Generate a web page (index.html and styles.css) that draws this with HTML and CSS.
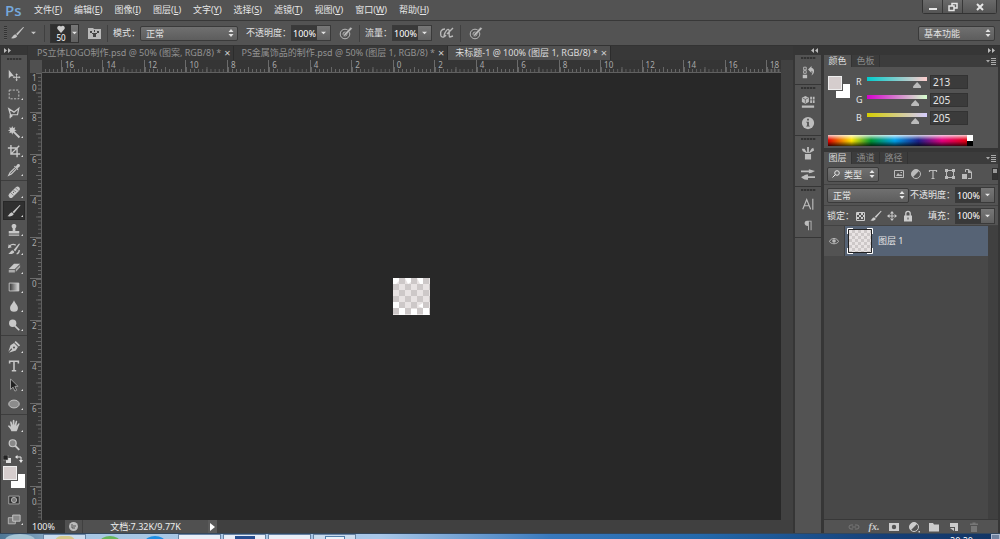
FILE: index.html
```html
<!DOCTYPE html>
<html lang="zh-CN">
<head>
<meta charset="utf-8">
<title>Photoshop</title>
<link rel="stylesheet" href="styles.css">
</head>
<body>
<svg class="defs" aria-hidden="true">
  <defs>
    <symbol id="updown" viewBox="0 0 6 8"><path d="M0.500 3L3 0L5.500 3ZM0.500 5L3 8L5.500 5Z"/></symbol>
    <symbol id="down" viewBox="0 0 6 4"><path d="M0 0.500H6L3 3.500Z"/></symbol>
    <symbol id="brush" viewBox="0 0 16 16"><path d="M15.500 1.500L8 10.500L6.300 9L14.500 1Z M5.500 9.500L7.700 11.500C7 14 3.500 14.500 0.500 14C2.500 13 3 10 5.500 9.500Z"/></symbol>
    <symbol id="pressure" viewBox="0 0 14 14"><circle cx="6" cy="8" r="4.800" fill="none" stroke="currentColor"/><circle cx="6" cy="8" r="2" fill="none" stroke="currentColor"/><path d="M4 11L5 8L11.500 1L13.500 2.500L7 9.500Z" stroke="#535353" stroke-width=".6"/></symbol>
    <symbol id="menu" viewBox="0 0 10 7"><path d="M0 2H4L2 4.500ZM5 0H10V1H5ZM5 2H10V3H5ZM5 4H10V5H5ZM5 6H10V7H5Z"/></symbol>
    <symbol id="adjust" viewBox="0 0 12 12"><circle cx="6" cy="6" r="4.500" fill="none" stroke="currentColor"/><path d="M9.200 2.800A4.500 4.500 0 0 0 2.800 9.200Z"/></symbol>
    <pattern id="checks" width="12" height="12" patternUnits="userSpaceOnUse"><path fill="#e8e3e3" d="M0 0H12V12H0Z"/><path fill="#cdc8c8" d="M6 0H12V6H6ZM0 6H6V12H0Z"/></pattern>
  </defs>
</svg>

<header class="menubar">
  <span class="logo">Ps</span>
  <nav class="menus">
    <button>文件(<u>F</u>)</button><button>编辑(<u>E</u>)</button><button>图像(<u>I</u>)</button><button>图层(<u>L</u>)</button><button>文字(<u>Y</u>)</button><button>选择(<u>S</u>)</button><button>滤镜(<u>T</u>)</button><button>视图(<u>V</u>)</button><button>窗口(<u>W</u>)</button><button>帮助(<u>H</u>)</button>
  </nav>
  <div class="window-buttons">
    <button aria-label="最小化"><svg width="10" height="10" viewBox="0 0 10 10"><path d="M1 6H9V8H1Z"/></svg></button>
    <button aria-label="还原"><svg width="10" height="10" viewBox="0 0 10 10" fill="none" stroke="currentColor" stroke-width="1.500"><path d="M4 4V1.500H9V6H6M1 4H6V8.500H1Z"/></svg></button>
    <button class="close" aria-label="关闭"><svg width="10" height="10" viewBox="0 0 10 10" stroke="currentColor" stroke-width="2"><path d="M2 2L8 8M8 2L2 8"/></svg></button>
  </div>
</header>

<div class="options">
  <span class="drag"></span>
  <button class="tool-preset" aria-label="画笔工具"><svg width="15" height="14"><use href="#brush"/></svg><svg width="5" height="4"><use href="#down"/></svg></button>
  <i class="rule"></i>
  <button class="tip" aria-label="画笔预设"><span class="tip-view"><svg width="8" height="8" viewBox="0 0 8 8"><path d="M4 8L0.500 4C-0.500 2 1.500-0.500 4 1.500C6.500-0.500 8.500 2 7.500 4Z"/></svg>50</span><span class="drop"><svg width="5" height="4"><use href="#down"/></svg></span></button>
  <button class="plain" aria-label="切换画笔面板"><svg width="13" height="12" viewBox="0 0 13 12"><path d="M0 1H5L6 2H13V12H0Z"/><path fill="#444" d="M2 4H4V6H2ZM6 3H7V5H6ZM9 4H11V6H9ZM4 6H9V7H8V10H5V7H4Z"/></svg></button>
  <i class="rule"></i>
  <label for="mode">模式：</label>
  <span class="select mode"><select id="mode"><option>正常</option></select><svg width="6" height="8"><use href="#updown"/></svg></span>
  <label for="opacity">不透明度：</label>
  <span class="number"><input id="opacity" value="100%"><button class="drop" aria-label="调整不透明度"><svg width="5" height="4"><use href="#down"/></svg></button></span>
  <button class="plain" aria-label="不透明度压力"><svg width="14" height="14"><use href="#pressure"/></svg></button>
  <i class="rule"></i>
  <label for="flow">流量：</label>
  <span class="number"><input id="flow" value="100%"><button class="drop" aria-label="调整流量"><svg width="5" height="4"><use href="#down"/></svg></button></span>
  <button class="plain" aria-label="喷枪"><svg width="14" height="14" viewBox="0 0 14 14" fill="none" stroke="currentColor"><path d="M5 3C1 3 0 6 1 10C2 12 5 11 6 9M4 10C5 5 8 2 9 4C10 6 8 10 10 11L13 10M7 8L13 2" stroke-width="1.400"/></svg></button>
  <i class="rule"></i>
  <button class="plain" aria-label="大小压力"><svg width="14" height="14"><use href="#pressure"/></svg></button>
  <span class="select workspace"><select aria-label="工作区"><option>基本功能</option></select><svg width="6" height="8"><use href="#updown"/></svg></span>
</div>

<main class="workspace-area">
  <aside class="tools">
    <div class="collapse left"><svg width="7" height="5" viewBox="0 0 7 5"><path d="M0 0L3 2.500L0 5ZM4 0L7 2.500L4 5Z"/></svg></div>
    <div class="tool-list">
      <span class="grip"></span>
      <button class="tool last" aria-label="移动"><svg viewBox="0 0 16 16"><path d="M2 2V12L4.500 9.500H8ZM11 6L12.500 8H11.500V10H13.500V9L15.500 10.500L13.500 12V11H11.500V13H12.500L11 15L9.500 13H10.500V11H8.500V12L6.500 10.500L8.500 9V10H10.500V8H9.500Z"/></svg></button>
      <button class="tool" aria-label="矩形选框"><svg viewBox="0 0 16 16"><path d="M2.500 3.500H13.500V13.500H2.500Z" fill="none" stroke="currentColor" stroke-dasharray="2.500 1.500"/></svg></button>
      <button class="tool" aria-label="多边形套索"><svg viewBox="0 0 16 16"><path d="M4 10L2 3L8 7L13.500 2.500L12 10H5C3 10 3 13 5 12C7 11 4 9 3.500 14" fill="none" stroke="currentColor" stroke-width="1.400"/></svg></button>
      <button class="tool" aria-label="魔棒"><svg viewBox="0 0 16 16"><path d="M6 1L7 3.500L9.500 2.500L8.500 5L11 6L8.500 7L15 13.500L13.500 15L7 8.500L6 11L5 8.500L2.500 9.500L3.500 7L1 6L3.500 5L2.500 2.500L5 3.500Z"/></svg></button>
      <button class="tool" aria-label="裁剪"><svg viewBox="0 0 16 16"><path d="M4.500 1V11.500H15M1 4.500H11.500V15M5 11L14 2" fill="none" stroke="currentColor" stroke-width="1.600"/></svg></button>
      <button class="tool" aria-label="吸管"><svg viewBox="0 0 16 16"><path d="M9 3L13 7L12 8L8 4ZM10 4L12 1.500C14 0.500 15.500 2 14.500 4L12 6Z"/><path d="M9 5.500L3.500 11L2 14L5 12.500L10.500 7" fill="none" stroke="currentColor" stroke-width="1.300"/></svg></button>
      <hr>
      <button class="tool" aria-label="污点修复"><svg viewBox="0 0 16 16"><path d="M12 4.500L4.500 12" stroke="currentColor" stroke-width="5.500" stroke-linecap="round"/><path d="M9.500 3L13 6.500M4 8.500L7.500 12" stroke="#666" stroke-width=".8"/><path d="M7 8H8V9H7ZM9 7H10V8H9ZM7.500 6H8.500V7H7.500Z" fill="#555"/></svg></button>
      <button class="tool selected" aria-label="画笔"><svg viewBox="0 0 16 16"><use href="#brush"/></svg></button>
      <button class="tool" aria-label="仿制图章"><svg viewBox="0 0 16 16"><path d="M8 1C11 1 11.500 4 9.500 6V9H14V12H2V9H6.500V6C4.500 4 5 1 8 1ZM2 13H14V14.500H2Z"/></svg></button>
      <button class="tool" aria-label="历史记录画笔"><svg viewBox="0 0 16 16"><path d="M15 2L9.500 10.500L7.500 9L13.500 2ZM6.500 9.500L8.500 11.500C7.500 14 4 14 1.500 13.500C4 12 4 10 6.500 9.500ZM1 7L2 2.500L5.500 6Z"/><path d="M3 4.500C5 2.500 8 2.500 10 3.500M11 13.500C13 13 14 11 14 9" fill="none" stroke="currentColor" stroke-width="1.500"/></svg></button>
      <button class="tool" aria-label="橡皮擦"><svg viewBox="0 0 16 16"><path d="M8 3H15L9 9H2Z"/><path d="M2 10H9V13H2ZM10 9.500L15 4.500V7L10 12.500Z" fill="#aaa"/></svg></button>
      <button class="tool" aria-label="渐变"><svg viewBox="0 0 16 16"><linearGradient id="fade"><stop stop-color="#333"/><stop offset="1" stop-color="#ddd"/></linearGradient><path d="M2.500 3.500H13.500V12.500H2.500Z" fill="url(#fade)" stroke="#ccc"/></svg></button>
      <button class="tool" aria-label="模糊"><svg viewBox="0 0 16 16"><path d="M8 1.500C9 5 12.500 7 12.500 10.500A4.500 4 0 0 1 3.500 10.500C3.500 7 7 5 8 1.500Z"/></svg></button>
      <button class="tool" aria-label="减淡"><svg viewBox="0 0 16 16"><circle cx="6.500" cy="6" r="4.200"/><path d="M9 9L14 14" stroke="currentColor" stroke-width="2"/></svg></button>
      <hr>
      <button class="tool" aria-label="钢笔"><svg viewBox="0 0 16 16"><path d="M10 1L15 6L13.500 7.500L8.500 2.500ZM8 3.500L12.500 8L10 12L2 14.500L6 10.500L5 9.500L1.500 13.500L4 6Z"/><circle cx="8" cy="8.500" r="1.200" fill="#555"/></svg></button>
      <button class="tool" aria-label="横排文字"><svg viewBox="0 0 16 16"><path d="M3 5V2.500H13V5M8 2.500V13.500M5.500 13.500H10.500" fill="none" stroke="currentColor" stroke-width="1.800"/></svg></button>
      <button class="tool" aria-label="路径选择"><svg viewBox="0 0 16 16"><path d="M4 1V13L7 10.500L9 15L11 14L9 9.500H12.500Z" fill="#222" stroke="#aaa"/></svg></button>
      <button class="tool" aria-label="椭圆"><svg viewBox="0 0 16 16"><ellipse cx="8" cy="8" rx="6" ry="4.500" fill="#8c8c8c" stroke="#ccc"/></svg></button>
      <hr>
      <button class="tool" aria-label="抓手"><svg viewBox="0 0 16 16"><path d="M5 14C4 11 2.500 10 1 8C2 7 3.500 7.500 4.500 9L3.500 3.500C4 2 5 2.500 5.500 4L6.500 7L6.500 2C7 0.500 8.500 0.500 8.500 2V7L10 2.500C11 1.500 12 2 11.500 3.500L10.700 8L13 5C14.500 4.500 14.500 5.500 14 6.500C12.500 9 12.500 12 11 14Z"/></svg></button>
      <button class="tool last" aria-label="缩放"><svg viewBox="0 0 16 16"><circle cx="6.500" cy="6" r="4" fill="#898989" stroke="currentColor" stroke-width="1.400"/><path d="M9.500 9L14 13.500" stroke="currentColor" stroke-width="2.200"/></svg></button>
      <div class="mini"><svg width="8" height="8" viewBox="0 0 8 8"><path fill="#ddd" d="M3 3H8V8H3Z"/><path fill="#222" stroke="#aaa" stroke-width=".5" d="M0 0H5V5H0Z"/></svg><svg width="8" height="8" viewBox="0 0 8 8"><path d="M0 2L2.500 0V4ZM4 5H8L6 8Z"/><path d="M2 2H6V6" fill="none" stroke="currentColor"/></svg></div>
      <div class="swatch"><button class="back" aria-label="背景色"></button><button class="fore" aria-label="前景色"></button></div>
      <button class="tool last" aria-label="快速蒙版"><svg viewBox="0 0 16 16"><path d="M2 3.500H14V12.500H2Z" fill="#303030" stroke="#aaa"/><circle cx="8" cy="8" r="3" fill="#777" stroke="#bbb"/></svg></button>
      <button class="tool" aria-label="屏幕模式"><svg viewBox="0 0 16 16"><path d="M1.500 6.500H9.500V13.500H1.500Z" fill="#777" stroke="#bbb"/><path d="M6.500 3.500H15V10.500H6.500Z" fill="#888" stroke="#ccc"/></svg></button>
    </div>
  </aside>

  <section class="document">
    <div class="tabs">
      <div class="tab"><a href="#canvas">PS立体LOGO制作.psd @ 50% (图案, RGB/8) *</a><button aria-label="关闭">×</button></div>
      <div class="tab"><a href="#canvas">PS金属饰品的制作.psd @ 50% (图层 1, RGB/8) *</a><button aria-label="关闭">×</button></div>
      <div class="tab active"><a href="#canvas">未标题-1 @ 100% (图层 1, RGB/8) *</a><button aria-label="关闭">×</button></div>
    </div>
    <div class="view">
      <div class="corner"></div>
      <div class="ruler-x"><span>16</span><span>14</span><span>12</span><span>10</span><span>8</span><span>6</span><span>4</span><span>2</span><span>0</span><span>2</span><span>4</span><span>6</span><span>8</span><span>10</span><span>12</span><span>14</span><span>16</span><span class="end">18</span></div>
      <div class="scroll"></div>
      <div class="ruler-y"><span>1<br>0</span><span>8</span><span>6</span><span>4</span><span>2</span><span>0</span><span>2</span><span>4</span><span>6</span><span>8</span><span>1<br>0</span></div>
      <div class="canvas" id="canvas"><svg width="37" height="37" viewBox="0 0 37 37"><path fill="url(#checks)" d="M0 0H37V37H0Z"/><path fill="#fff" d="M0 0H6V3L3 6H0ZM12 0H18V4L15 6ZM24 0H30V6H27ZM0 24H6V30H0ZM6 30H12V37H6ZM18 31H24V37H18ZM25 28L30 25V30ZM30 30H36V37H30Z"/></svg></div>
    </div>
    <footer class="status"><span class="zoom">100%</span><button class="sync" aria-label="同步"><svg width="9" height="9" viewBox="0 0 9 9"><circle cx="4.500" cy="4.500" r="4.500"/><path d="M3 2V6H6M4 4H7" stroke="#555" fill="none"/></svg></button><span class="info">文档:7.32K/9.77K</span><button class="more" aria-label="更多"><svg width="5" height="8" viewBox="0 0 5 8"><path d="M0 0L5 4L0 8Z"/></svg></button></footer>
  </section>

  <aside class="dock">
    <div class="collapse right"><svg width="7" height="5" viewBox="0 0 7 5"><path d="M3 0L0 2.500L3 5ZM7 0L4 2.500L7 5Z"/></svg></div>
    <div class="group"><span class="grip"></span>
      <button aria-label="历史记录"><svg viewBox="0 0 16 16"><path d="M3 2.500H6V5.500H3ZM3 6.500H6V9.500H3Z" fill="none" stroke="currentColor"/><path d="M2 11H7V15H2ZM8 5L12 1V3C16 4 16 9 12 12C13 9 14 7 12 6.500V9Z"/></svg></button></div>
    <div class="group"><span class="grip"></span>
      <button aria-label="属性"><svg viewBox="0 0 16 16"><path d="M5 1L9 3V8L5 10L1 8V3Z"/><path d="M2 3.500L5 5L8 3.500M5 5V9" stroke="#555" stroke-width=".8" fill="none"/><path d="M10.500 2H12.500V5H10.500ZM13.500 2H15.500V5H13.500ZM10.500 6H12.500V9H10.500ZM13.500 6H15.500V9H13.500ZM1 12H15V14.500H1Z"/></svg></button>
      <button aria-label="信息"><svg viewBox="0 0 16 16"><circle cx="8" cy="8" r="7"/><path d="M7 3H9V5H7ZM6 6.500H9V11H10V12H6V11H7V7.500H6Z" fill="#505050"/></svg></button></div>
    <div class="group"><span class="grip"></span>
      <button aria-label="画笔预设"><svg viewBox="0 0 16 16"><path d="M4.500 9H11.500V15.500H4.500ZM7 1H9V8H7ZM1 3L4 3L7 8H6L2 6ZM14 2L15 5L10 8H9L12 3Z"/></svg></button>
      <button aria-label="画笔"><svg viewBox="0 0 16 16"><path d="M0 4H9V6H0ZM9 2.500L12 3.500L16 4.500L12 6.500L9 7ZM8 10.500H16V12.500H8ZM8 8.500V14.500C3 15 2 13 0 11.500C3 10.500 4 8.500 8 8.500Z"/></svg></button></div>
    <div class="group"><span class="grip"></span>
      <button aria-label="字符"><svg viewBox="0 0 16 16" fill="none" stroke="currentColor" stroke-width="1.300"><path d="M2 14L6.500 3L11 14M4 10H9M13.500 2V14.500"/></svg></button>
      <button aria-label="段落"><svg viewBox="0 0 16 16"><path d="M12 3V14H11V4H9V14H8V9C3 9 3 3 7 3Z"/></svg></button></div>
    <div class="fill"></div>
  </aside>

  <aside class="panels">
    <div class="collapse right"><svg width="7" height="5" viewBox="0 0 7 5"><path d="M0 0L3 2.500L0 5ZM4 0L7 2.500L4 5Z"/></svg></div>
    <section class="panel">
      <div class="panel-tabs"><button class="on">颜色</button><button>色板</button><svg class="panel-menu" width="10" height="7"><use href="#menu"/></svg></div>
      <div class="color">
        <div class="swatch"><button class="back" aria-label="背景色"></button><button class="fore" aria-label="前景色"></button></div>
        <div class="channels">
          <div class="channel"><label for="r">R</label><span class="track r"><input type="range" aria-label="R" max="255" value="213"></span><input id="r" class="value" value="213"></div>
          <div class="channel"><label for="g">G</label><span class="track g"><input type="range" aria-label="G" max="255" value="205"></span><input id="g" class="value" value="205"></div>
          <div class="channel"><label for="b">B</label><span class="track b"><input type="range" aria-label="B" max="255" value="205"></span><input id="b" class="value" value="205"></div>
        </div>
        <div class="spectrum"><span class="hues"></span><span class="ends"></span></div>
      </div>
    </section>
    <section class="panel layers">
      <div class="panel-tabs"><button class="on">图层</button><button>通道</button><button>路径</button><svg class="panel-menu" width="10" height="7"><use href="#menu"/></svg></div>
      <div class="row filter">
        <span class="select kind"><svg class="search" width="8" height="8" viewBox="0 0 8 8" fill="none" stroke="currentColor"><circle cx="5" cy="3" r="2.300"/><path d="M3.500 4.500L0.500 7.500"/></svg><select aria-label="类型"><option>类型</option></select><svg width="6" height="8"><use href="#updown"/></svg></span>
        <span class="filter-icons">
          <button aria-label="像素"><svg viewBox="0 0 12 12"><path d="M1.500 2.500H10.500V9.500H1.500Z" fill="none" stroke="currentColor"/><path d="M3 8L5 5L7 7L8 6L9.500 8ZM7.500 4H9V5H7.500Z"/></svg></button>
          <button aria-label="调整"><svg viewBox="0 0 12 12"><use href="#adjust"/></svg></button>
          <button aria-label="文字"><svg viewBox="0 0 12 12" fill="none" stroke="currentColor"><path d="M2.500 4V2.500H9.500V4M6 2.500V10.500M4.500 10.500H7.500" stroke-width="1.200"/></svg></button>
          <button aria-label="形状"><svg viewBox="0 0 12 12"><path d="M2.500 2.500H9.500V9.500H2.500Z" fill="none" stroke="currentColor"/><path d="M1 1H4V4H1ZM8 1H11V4H8ZM1 8H4V11H1ZM8 8H11V11H8Z"/></svg></button>
          <button aria-label="智能对象"><svg viewBox="0 0 12 12"><path d="M4.500 4V1.500H8L10.500 4V10.500H7" fill="none" stroke="currentColor"/><path d="M1 6H6V11H1ZM7 1V5H11Z"/></svg></button>
        </span>
        <button class="switch" aria-label="开关过滤"></button>
      </div>
      <div class="row"><span class="select blend"><select aria-label="混合模式"><option>正常</option></select><svg width="6" height="8"><use href="#updown"/></svg></span><label for="lo">不透明度：</label><span class="number"><input id="lo" value="100%"><button class="drop" aria-label="调整图层不透明度"><svg width="5" height="4"><use href="#down"/></svg></button></span></div>
      <div class="row locks"><span>锁定：</span>
        <span class="lock-icons">
          <button aria-label="锁定透明像素"><svg viewBox="0 0 12 12"><path d="M2.500 2.500H10.500V10.500H2.500Z" fill="none" stroke="currentColor"/><path d="M3 3H5V5H3ZM7 3H9V5H7ZM5 5H7V7H5ZM9 5H10V7H9ZM3 7H5V9H3ZM7 7H9V9H7Z"/></svg></button>
          <button aria-label="锁定图像像素"><svg viewBox="0 0 16 16"><use href="#brush"/></svg></button>
          <button aria-label="锁定位置"><svg viewBox="0 0 12 12"><path d="M6 1L8 3.500H4ZM6 11L8 8.500H4ZM1 6L3.500 4V8ZM11 6L8.500 4V8ZM5.500 3H6.500V9H5.500ZM3 5.500H9V6.500H3Z"/></svg></button>
          <button aria-label="锁定全部"><svg viewBox="0 0 12 12"><path d="M2 5.500H10V11.500H2Z"/><path d="M3.800 6V3.500A2.200 2.200 0 0 1 8.200 3.500V6" fill="none" stroke="currentColor" stroke-width="1.300"/><path d="M5.500 7.500H6.500V9.500H5.500Z" fill="#444"/></svg></button>
        </span>
        <label for="fill">填充：</label><span class="number"><input id="fill" value="100%"><button class="drop" aria-label="调整填充"><svg width="5" height="4"><use href="#down"/></svg></button></span></div>
      <div class="list">
        <div class="layer"><button class="eye" aria-label="可见性"><svg width="10" height="8" viewBox="0 0 10 8"><path d="M0.500 4.500C2 0.500 8 0.500 9.500 4.500C8 7.500 2 7.500 0.500 4.500Z" fill="none" stroke="currentColor"/><circle cx="5" cy="4" r="1.800"/></svg></button>
          <div class="layer-body"><svg width="26" height="26" viewBox="0 0 26 26"><path fill="none" stroke="#fff" d="M0.500 6V0.500H6M20 0.500H25.500V6M25.500 20V25.500H20M6 25.500H0.500V20"/><path fill="#fff" stroke="#222" d="M1.500 1.500H24.500V24.500H1.500Z"/><g transform="translate(2 2) scale(.5)"><path fill="url(#checks)" d="M0 0H44V44H0Z"/></g></svg><span>图层 1</span></div></div>
      </div>
      <div class="actions">
        <button class="off" aria-label="链接图层"><svg viewBox="0 0 12 12" fill="none" stroke="currentColor"><path d="M5 4H3A2 2 0 0 0 3 8H5M7 4H9A2 2 0 0 1 9 8H7M4 6H8"/></svg></button>
        <button class="fx" aria-label="图层样式">fx.</button>
        <button aria-label="添加蒙版"><svg viewBox="0 0 12 12"><path fill-rule="evenodd" d="M1 2H11V10H1ZM6 3.800A2.200 2.200 0 1 0 6 8.200A2.200 2.200 0 1 0 6 3.800Z"/></svg></button>
        <button aria-label="调整图层"><svg viewBox="0 0 12 12"><use href="#adjust"/><path d="M10.500 10H12V11.500H10.500Z"/></svg></button>
        <button aria-label="新建组"><svg viewBox="0 0 12 12"><path d="M1 2H5L6 3.500H11V10.500H1Z"/></svg></button>
        <button aria-label="新建图层"><svg viewBox="0 0 12 12"><path d="M2 2H10V10H7V6H2ZM2 7H6V10Z"/></svg></button>
        <button class="off" aria-label="删除图层"><svg viewBox="0 0 12 12"><path d="M2 2.500H4.500V1.500H7.500V2.500H10V4H2ZM3 5H9V11H3Z"/></svg></button>
      </div>
    </section>
  </aside>
</main>

<footer class="taskbar">
  <span class="orb"></span>
  <span class="task pale"><i class="yellow"></i></span>
  <span class="task bare"><i class="green"></i></span>
  <span class="task bare"><i class="azure"></i></span>
  <span class="task"></span>
  <span class="task"><i class="navy"></i></span>
  <span class="task"></span>
  <span class="task pale"><i class="window"></i></span>
  <time>20:20</time>
  <span class="peek"></span>
</footer>
</body>
</html>
```
FILE: styles.css
```css
* { box-sizing: border-box; }
body {
  margin: 0;
  height: 100vh;
  display: flex;
  flex-direction: column;
  overflow: hidden;
  background: #535353;
  color: #e6e6e6;
  font: 9px/12px "Noto Sans", "Noto Sans CJK SC", sans-serif;
}
button, input, select { font: inherit; color: inherit; border: 0; padding: 0; margin: 0; background: none; border-radius: 0; }
button { display: flex; align-items: center; justify-content: center; }
svg { fill: currentColor; display: block; flex: none; }
svg[fill="none"] { fill: none; }
a { color: inherit; text-decoration: none; }
.defs { position: absolute; width: 0; height: 0; }

.menubar { display: flex; align-items: center; height: 21px; flex: none; border-bottom: 1px solid #383838; }
.logo { width: 34px; padding-left: 5px; color: #75a8dc; font: 600 15px/20px "Open Sans", sans-serif; }
.menus { display: flex; gap: 12px; flex: 1; }
.window-buttons { display: flex; align-self: flex-start; margin-right: 3px; border: 1px solid #333; border-top: 0; border-radius: 0 0 3px 3px; }
.window-buttons button { width: 20px; height: 13px; background: linear-gradient(#6a6a6a, #555); border-right: 1px solid #383838; }
.window-buttons .close { width: 33px; border: 0; }

.options { display: flex; align-items: center; height: 24px; flex: none; padding: 0 5px 0 4px; color: #e2e2e2; }
.drag { width: 3px; height: 14px; background: repeating-linear-gradient(#333 0 1px, #5c5c5c 1px 2px); }
.rule { width: 1px; height: 17px; background: #404040; margin: 0 5px; }
.tool-preset { gap: 6px; width: 32px; color: #c4c4c4; }
.tip { height: 19px; background: #2f2f2f; border: 1px solid #333; }
.tip-view { width: 20px; display: flex; flex-direction: column; align-items: center; font-size: 8px; line-height: 9px; color: #fff; }
.tip-view svg { color: #ccc; }
.tip .drop { width: 7px; height: 17px; }
.drop { display: flex; align-items: center; justify-content: center; width: 13px; height: 14px; background: linear-gradient(#777, #606060); }
.plain { width: 14px; margin: 0 1px 0 8px; color: #b8b8b8; }
.rule + .plain { margin-left: 3px; }
.select { position: relative; display: flex; align-items: center; height: 15px; background: linear-gradient(#707070, #5d5d5d); border: 1px solid #3a3a3a; border-radius: 2px; }
.select select { appearance: none; width: 100%; height: 13px; padding-left: 5px; outline: 0; line-height: 13px; }
.select svg:last-child { position: absolute; right: 3px; pointer-events: none; }
.mode { width: 98px; margin-right: 8px; }
.workspace { width: 77px; margin-left: auto; }
.number { display: flex; height: 16px; border: 1px solid #3a3a3a; }
.number input { width: 25px; height: 14px; background: #393939; text-align: center; color: #fff; }

.workspace-area { flex: 1; min-height: 0; display: flex; background: #363636; border-top: 1px solid #333; }
.collapse { height: 9px; display: flex; align-items: center; padding: 0 3px; color: #bbb; flex: none; }
.collapse.right { justify-content: flex-end; }
.tools { width: 28px; padding-left: 1px; display: flex; flex-direction: column; border-right: 1px solid #333; }
.tool-list { background: #535353; flex: 1; min-height: 0; display: flex; flex-direction: column; }
.grip { width: 15px; height: 2px; margin: 3px auto 5px; flex: none; background: repeating-linear-gradient(90deg, #333 0 2px, #484848 2px 3px); }
.tool { position: relative; height: 19px; flex: none; color: #c8c8c8; }
.tool svg { width: 14px; height: 14px; }
.tool::after { content: ""; position: absolute; right: 4px; bottom: 3px; border: 1px solid transparent; border-right-color: #ddd; border-bottom-color: #ddd; }
.tool.last::after { display: none; }
.tool.selected { background: #303030; border: 1px solid #282828; margin: 0 2px; }
.tool.selected::after { right: 1px; bottom: 2px; }
.tool-list hr { width: 100%; margin: 1px 0; border: 0; height: 1px; background: #3d3d3d; flex: none; }
.mini { display: flex; justify-content: space-between; padding: 1px 4px 0 2px; height: 11px; flex: none; }
.swatch { position: relative; align-self: start; width: 22px; height: 22px; flex: none; }
.tool-list .swatch { margin: 1px 0 2px 2px; }
.swatch button { position: absolute; width: 14px; height: 14px; }
.swatch .fore { left: 0; top: 0; background: #d5cdcd; border: 1px solid #eee; outline: 1px solid #555; }
.swatch .back { right: 0; bottom: 0; background: #fff; }

.document { flex: 1; min-width: 0; display: flex; flex-direction: column; }
.tabs { display: flex; height: 14px; flex: none; padding-left: 2px; background: #383838; }
.tab { display: flex; align-items: center; gap: 3px; padding: 0 3px 0 7px; border-right: 1px solid #2c2c2c; color: #929292; white-space: nowrap; }
.tab button { color: #ccc; font-size: 11px; line-height: 12px; }
.tab.active { background: #505050; color: #ddd; }
.view { flex: 1; min-height: 0; display: grid; grid-template: 13px 1fr / 12px 1fr 12px; margin-left: 2px; }
.corner { background: #505050; }
.ruler-x, .ruler-y { display: flex; color: #a9a9a9; font-size: 8px; line-height: 10px; background: #353535; }
.ruler-x { padding-left: 19px; border-bottom: 1px solid #606060; overflow: hidden;
  background: repeating-linear-gradient(90deg, transparent 0 3px, #606060 3px 4px) 0 9px / 19px 3px no-repeat #353535; }
.ruler-x span { flex: 1; min-width: 0; padding-left: 3px; border-left: 1px solid #6b6b6b;
  background: linear-gradient(90deg, #666 1px, transparent 1px) 0 100% / 10% 3px repeat-x, linear-gradient(90deg, #666 1px, transparent 1px) 0 100% / 50% 5px repeat-x; }
.ruler-x .end { flex: 0 0 15px; }
.ruler-y { flex-direction: column; border-right: 1px solid #606060; }
.ruler-y span { flex: 1; min-height: 0; padding-left: 2px; border-top: 1px solid #6b6b6b;
  background: linear-gradient(#666 1px, transparent 1px) 100% 0 / 3px 10% repeat-y, linear-gradient(#666 1px, transparent 1px) 100% 0 / 5px 50% repeat-y; }
.ruler-y span:first-child { flex: 0 0 39px; border-top: 0; }
.ruler-y span:last-child { flex: 0 0 34px; }
.scroll { grid-column: 3; grid-row: 1 / 3; background: #414141; }
.canvas { background: #282828; display: flex; align-items: center; justify-content: center; }
.status { display: flex; height: 13px; flex: none; background: #404040; line-height: 13px; color: #eee; }
.zoom { width: 37px; padding-left: 4px; background: #353535; }
.sync { width: 17px; background: #505050; color: #bbb; }
.info { width: 126px; text-align: center; background: #505050; border-left: 1px solid #404040; }
.more { width: 9px; background: #5a5a5a; color: #fff; }

.dock { width: 29px; padding: 0 1px 0 2px; display: flex; flex-direction: column; }
.group { display: flex; flex-direction: column; background: #535353; margin-bottom: 1px; padding-bottom: 2px; color: #bdbdbd; }
.group .grip { margin: 2px auto; }
.group button { height: 21px; }
.group svg { width: 14px; height: 14px; }
.fill { flex: 1; background: #535353; }

.panels { width: 178px; padding: 0 2px; display: flex; flex-direction: column; }
.panel { background: #535353; }
.panel-tabs { display: flex; height: 12px; flex: none; background: #3c3c3c; color: #8c8c8c; align-items: stretch; }
.panel-tabs button { width: 28px; border-right: 1px solid #333; }
.panel-tabs .on { background: #535353; color: #ddd; }
.panel-menu { margin: 3px 2px 0 auto; color: #aaa; }
.color { height: 81px; display: grid; grid-template: 1fr auto / 28px minmax(0, 1fr); padding: 8px 25px 2px 4px; }
.color > .swatch { margin-top: 1px; }
.channels { display: flex; flex-direction: column; gap: 4px; }
.channel { display: flex; align-items: center; height: 14px; }
.channel label { width: 11px; }
.track { width: 60px; height: 12px; background: 0 1px / 100% 4px no-repeat; display: flex; align-items: flex-end; flex: none; }
.track.r { background-image: linear-gradient(90deg, #00cdcd, #ffcdcd); }
.track.g { background-image: linear-gradient(90deg, #d500cd, #d5ffcd); }
.track.b { background-image: linear-gradient(90deg, #d5cd00, #d5cdff); }
.track input { appearance: none; flex: none; width: 68px; height: 6px; margin: 0 -4px; }
.track input::-webkit-slider-thumb { appearance: none; width: 8px; height: 6px; background: #bbb; clip-path: polygon(50% 0, 100% 70%, 100% 100%, 0 100%, 0 70%); }
.value { width: 38px; height: 14px; margin-left: 3px; padding-left: 2px; background: #3b3b3b; border: 1px solid #333; font-size: 10px; }
.spectrum { grid-column: 1 / 3; display: flex; height: 11px; }
.hues { flex: 1; background: linear-gradient(#fffc, #fff0 45%, #0000 55%, #000b), linear-gradient(90deg, #e20000, #ffe500 17%, #009535 31%, #00a0e9 48%, #1d2088 65%, #e4007f 82%, #e60012); }
.ends { width: 6px; background: linear-gradient(#fff 50%, #000 50%); }

.layers { flex: 1; min-height: 0; margin-top: 4px; display: flex; flex-direction: column; }
.row { display: flex; align-items: center; height: 21px; flex: none; padding: 0 3px; border-bottom: 1px solid #424242; }
.row > label { margin-left: auto; white-space: nowrap; }
.filter { padding-right: 0; }
.locks { height: 20px; }
.kind { width: 52px; }
.kind .search { margin-left: 4px; }
.kind select { padding-left: 4px; }
.filter-icons { display: flex; gap: 5px; margin-left: 14px; color: #bbb; }
.filter-icons svg, .lock-icons svg, .actions svg { width: 12px; height: 12px; }
.switch { width: 6px; height: 12px; margin-left: auto; background: linear-gradient(#999 45%, #333 45%); border: 1px solid #303030; }
.blend { width: 82px; }
.lock-icons { display: flex; gap: 4px; color: #ccc; }
.list { flex: 1; min-height: 0; background: #484848; border-right: 10px solid #404040; }
.layer { display: flex; height: 30px; }
.eye { width: 21px; background: #535353; border-right: 1px solid #404040; color: #bbb; }
.layer-body { flex: 1; display: flex; align-items: center; gap: 5px; padding-left: 2px; background: #566375; }
.actions { display: flex; height: 14px; flex: none; align-items: center; justify-content: flex-end; gap: 8px; padding-right: 18px; border-top: 1px solid #383838; color: #ccc; }
.actions .off { color: #777; }
.fx { width: 12px; font: italic bold 10px/12px "Liberation Serif", serif; }

.taskbar { height: 6px; flex: none; display: flex; overflow: hidden; align-items: flex-start; background: linear-gradient(90deg, #4e7694, #a7c6e3 8%, #a9c7e8 38%, #3979bd 55%, #2469ab 70%, #164078 88%, #123463); border-top: 1px solid #33475c; }
.orb { width: 30px; height: 12px; margin: 0 8px 0 5px; border-radius: 50%; background: #a7c4d4; }
.task { width: 43px; height: 8px; margin-right: 2px; border: 1px solid #6783a4; background: #e9eef7; display: flex; justify-content: center; }
.task.pale { background: #cbdcee; }
.task.bare { background: none; border-color: transparent; }
.task i { width: 20px; height: 12px; margin-top: 1px; }
.yellow { background: #d6c98c; border-radius: 6px; }
.green { background: #66b55a; border-radius: 50%; }
.azure { background: #1d8de3; border-radius: 50%; }
.navy { background: #284f91; }
.window { background: #e8f3fb; border: 1px solid #527da9; }
.taskbar time { margin: 2px 18px 0 auto; color: #fff; line-height: 9px; }
.peek { width: 9px; height: 6px; background: #7183a0; border: 1px solid #aebbd0; }
```
